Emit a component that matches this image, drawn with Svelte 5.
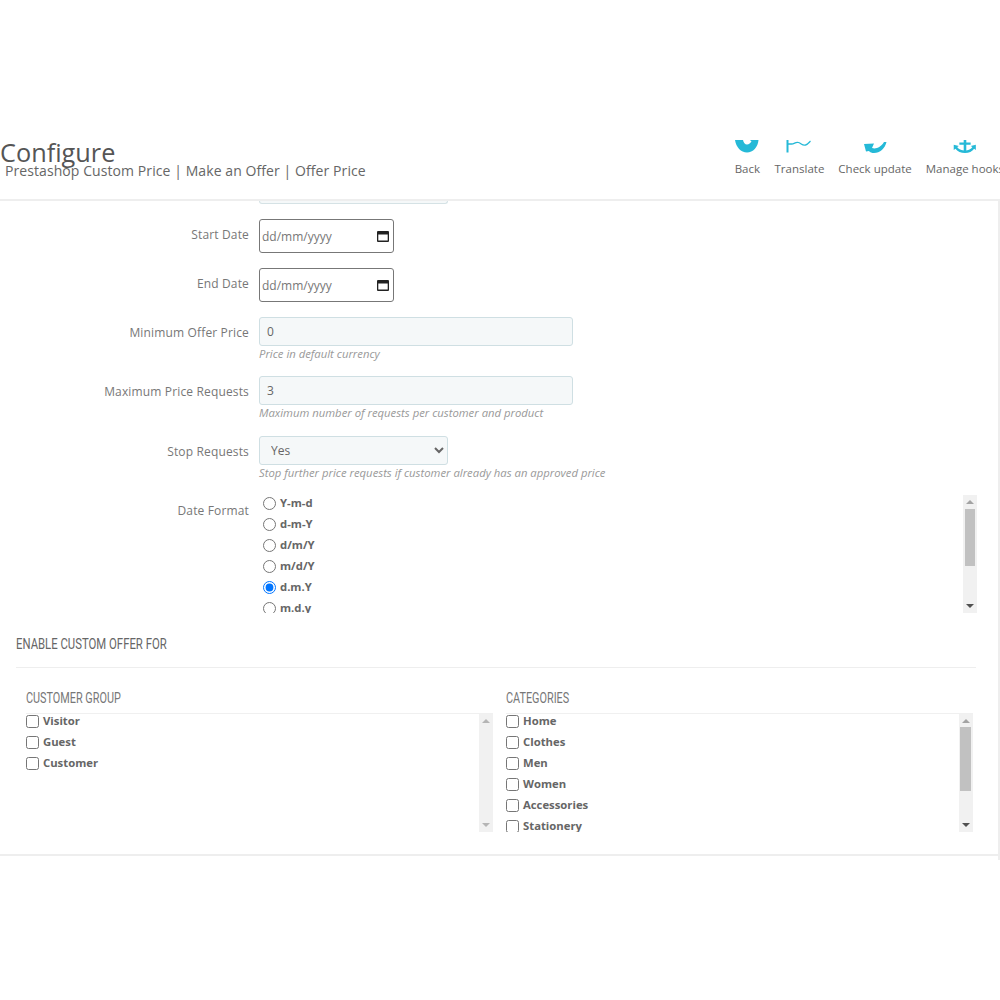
<script>
	const formats = ['Y-m-d', 'd-m-Y', 'd/m/Y', 'm/d/Y', 'd.m.Y', 'm.d.y'];
	const groups = ['Visitor', 'Guest', 'Customer'];
	const categories = ['Home', 'Clothes', 'Men', 'Women', 'Accessories', 'Stationery'];
</script>

{#snippet calendar()}
	<svg class="cal" width="12" height="12" viewBox="0 0 12 12"><path d="M1 1h10a1 1 0 0 1 1 1v9a1 1 0 0 1-1 1H1a1 1 0 0 1-1-1V2a1 1 0 0 1 1-1zm.300 3.500v6h9.400v-6z" fill="#222"/></svg>
{/snippet}

<div class="page">
	<header class="head">
		<div class="titles">
			<h1>Configure</h1>
			<p class="sub">Prestashop Custom Price | Make an Offer | Offer Price</p>
		</div>
		<nav class="tools">
			<a class="tool back" href="#back">
				<svg width="24" height="13" viewBox="0 0 24 13"><path d="M0 0h8c.5 2.500 2 4.500 4 4.500s3.500-1.500 4.500-3L15 0h8.500C23 7 18 12.500 12 12.500S1 7 0 0z" fill="#25b9d7"/></svg>
				<span>Back</span>
			</a>
			<a class="tool" href="#translate">
				<svg width="26" height="13" viewBox="0 0 26 13"><path d="M1.500 0v12.500" stroke="#25b9d7" stroke-width="2" fill="none"/><path d="M2 4h3.500c3 0 4-2.500 7-1.500s4 3.500 7 2.500c2-.5 3.500-2.500 5-4" stroke="#25b9d7" stroke-width="1.300" fill="none"/></svg>
				<span>Translate</span>
			</a>
			<a class="tool" href="#update">
				<svg width="23" height="13" viewBox="0 0 23 13"><path d="M0 4l10-.5-2 4.500c4 1.500 9-1 12-6h2.500C21 8.500 16 13 10 13c-2 0-4-.5-5-2l-3 .5z" fill="#25b9d7"/></svg>
				<span>Check update</span>
			</a>
			<a class="tool" href="#hooks">
				<svg width="28" height="14" viewBox="0 0 28 15"><path d="M12.500 0h3v3h5v2.500h-5v6.500c3-.5 6-2 7-4l-2-1 6-1.500v6l-2-1.500c-2 3-6 5-10.500 5S5 13 3 10l-2 1.500v-6l6 1.500-2 1c1 2 4 3.500 7.500 4V5.500h-5V3h5z" fill="#25b9d7"/></svg>
				<span>Manage hooks</span>
			</a>
		</nav>
	</header>

	<main class="content">
		<div class="inner">
			<div class="stub"></div>

			<div class="row date-row">
				<label class="lbl" for="start">Start Date</label>
				<div class="date">
					<input id="start" type="text" value="dd/mm/yyyy" />
					{@render calendar()}
				</div>
			</div>
			<div class="row date-row">
				<label class="lbl" for="end">End Date</label>
				<div class="date">
					<input id="end" type="text" value="dd/mm/yyyy" />
					{@render calendar()}
				</div>
			</div>

			<div class="row field first">
				<label class="lbl" for="min">Minimum Offer Price</label>
				<div>
					<input id="min" class="text" type="text" value="0" />
					<p class="help">Price in default currency</p>
				</div>
			</div>
			<div class="row field">
				<label class="lbl" for="max">Maximum Price Requests</label>
				<div>
					<input id="max" class="text" type="text" value="3" />
					<p class="help">Maximum number of requests per customer and product</p>
				</div>
			</div>
			<div class="row field">
				<label class="lbl" for="stop">Stop Requests</label>
				<div>
					<select id="stop" class="pick">
						<option>Yes</option>
						<option>No</option>
					</select>
					<p class="help">Stop further price requests if customer already has an approved price</p>
				</div>
			</div>

			<div class="row formats">
				<span class="lbl">Date Format</span>
				<div class="scrollbox fmt-box">
					<div class="list fmt-list">
						{#each formats as f}
							<label class="opt">
								<input type="radio" name="fmt" checked={f === 'd.m.Y'} />
								<span>{f}</span>
							</label>
						{/each}
					</div>
					<div class="bar">
						<i class="up"></i>
						<b class="thumb fmt-thumb"></b>
						<i class="down"></i>
					</div>
				</div>
			</div>

			<h2><span>ENABLE CUSTOM OFFER FOR</span></h2>

			<div class="cols">
				<section class="col">
					<h3><span>CUSTOMER GROUP</span></h3>
					<div class="scrollbox">
						<div class="list">
							{#each groups as g}
								<label class="opt"><input type="checkbox" /><span>{g}</span></label>
							{/each}
						</div>
						<div class="bar pale">
							<i class="up"></i>
							<i class="down"></i>
						</div>
					</div>
				</section>
				<section class="col">
					<h3><span>CATEGORIES</span></h3>
					<div class="scrollbox">
						<div class="list">
							{#each categories as c}
								<label class="opt"><input type="checkbox" /><span>{c}</span></label>
							{/each}
						</div>
						<div class="bar">
							<i class="up"></i>
							<b class="thumb"></b>
							<i class="down"></i>
						</div>
					</div>
				</section>
			</div>
		</div>
	</main>
</div>

<style>
	:global(body) {
		background: #fff;
		overflow: hidden;
	}
	.page {
		width: 1000px;
		height: 1000px;
		padding-top: 135px;
		box-sizing: border-box;
		overflow: hidden;
		font-family: "Open Sans", sans-serif;
		color: #666;
	}
	.head {
		display: flex;
		justify-content: space-between;
		height: 64px;
		border-bottom: 2px solid #eee;
	}
	h1 {
		margin: 0;
		font-size: 25.300px;
		font-weight: 400;
		line-height: 34px;
		color: #555;
	}
	.sub {
		margin: -6px 0 0 5px;
		font-size: 14px;
		line-height: 16px;
		color: #666;
		letter-spacing: 0.08px;
		white-space: nowrap;
	}
	.tools {
		display: flex;
		margin-right: -4px;
		padding-top: 5px;
	}
	.tool {
		display: flex;
		flex-direction: column;
		align-items: center;
		margin-left: 14px;
		color: #666;
		font-size: 11.500px;
		line-height: 16px;
		text-decoration: none;
		white-space: nowrap;
	}
	.back {
		margin-right: 0.500px;
	}
	.tool svg {
		display: block;
		height: 13px;
		margin-bottom: 8px;
	}
	.content {
		width: 998px;
		height: 659px;
		border-right: 2px solid #eee;
	}
	.inner {
		height: 655px;
		box-sizing: border-box;
		border-bottom: 2px solid #eee;
	}
	.stub {
		width: 187px;
		height: 2px;
		margin-left: 259px;
		border: 1px solid #d5e2e5;
		border-top: 0;
		border-radius: 0 0 3px 3px;
		background: #f5f8f9;
	}
	.row {
		display: flex;
		gap: 10px;
	}
	.lbl {
		width: 249px;
		flex: none;
		text-align: right;
		font-size: 12px;
		line-height: 32px;
		letter-spacing: 0.15px;
		color: #777;
		white-space: nowrap;
	}
	.date-row {
		margin-top: 15px;
	}
	.date {
		display: flex;
		align-items: center;
		width: 135px;
		height: 34px;
		box-sizing: border-box;
		padding: 0 4px 0 2px;
		border: 1px solid #777;
		border-radius: 3px;
		background: #fff;
	}
	.date input {
		width: 100%;
		min-width: 0;
		padding: 0;
		border: 0;
		outline: 0;
		background: none;
		font-family: "Open Sans", sans-serif;
		font-size: 12px;
		color: #777;
	}
	.cal {
		flex: none;
	}
	.field {
		margin-bottom: 15.500px;
	}
	.first {
		margin-top: 14.800px;
	}
	.text, .pick {
		display: block;
		height: 29px;
		box-sizing: border-box;
		border: 1px solid #cfdfe3;
		border-radius: 3px;
		background-color: #f5f8f9;
		font-family: "Open Sans", sans-serif;
		font-size: 12px;
		color: #666;
	}
	.text {
		width: 314px;
		padding: 0 7px;
	}
	.pick {
		width: 189px;
		padding: 0 7px;
	}
	.help {
		margin: 0;
		font-size: 11.300px;
		line-height: 15px;
		font-style: italic;
		color: #999;
		white-space: nowrap;
	}
	.formats {
		margin-top: -0.300px;
	}
	.scrollbox {
		display: flex;
		justify-content: space-between;
		height: 118px;
		overflow: hidden;
	}
	.fmt-box {
		width: 718px;
	}
	.list {
		display: flex;
		flex-direction: column;
		margin-top: -4px;
	}
	.fmt-list {
		margin-top: -3px;
		padding-left: 4px;
	}
	.opt {
		display: flex;
		flex: none;
		align-items: center;
		gap: 4px;
		height: 21px;
		font-size: 11.300px;
		font-weight: 700;
		color: #666;
	}
	.opt input {
		width: 13px;
		height: 13px;
		margin: 1px 0 0 0;
		flex: none;
	}
	.bar {
		position: relative;
		width: 14px;
		flex: none;
		background: #f1f1f1;
	}
	.thumb {
		position: absolute;
		top: 13px;
		left: 1px;
		right: 2px;
		height: 64px;
		background: #c1c1c1;
	}
	.fmt-thumb {
		top: 14px;
		left: 2px;
		height: 57px;
	}
	.up, .down {
		position: absolute;
		left: 3px;
		width: 0;
		height: 0;
		border-left: 4px solid transparent;
		border-right: 4px solid transparent;
	}
	.up {
		top: 5px;
		border-bottom: 4px solid #a3a3a3;
	}
	.down {
		bottom: 5px;
		border-top: 4px solid #505050;
	}
	.pale .up {
		border-bottom-color: #b5b5b5;
	}
	.pale .down {
		border-top-color: #b5b5b5;
	}
	h2, h3 {
		font-family: Roboto, sans-serif;
		font-size: 14px;
		line-height: 20px;
		font-weight: 400;
		white-space: nowrap;
	}
	h2 span, h3 span {
		display: inline-block;
		transform-origin: left center;
	}
	h2 {
		margin: 21px 0 0 16px;
		width: 960px;
		padding-bottom: 13px;
		border-bottom: 1px solid #eee;
		color: #666;
	}
	h2 span {
		transform: scaleX(0.81);
	}
	.cols {
		display: flex;
		gap: 13px;
		margin: 20px 0 0 26px;
		width: 947px;
	}
	.col {
		width: 467px;
	}
	h3 {
		margin: 0;
		padding-bottom: 5px;
		border-bottom: 1px solid #f0f0f0;
		color: #777;
	}
	h3 span {
		transform: scaleX(0.775);
	}
</style>
